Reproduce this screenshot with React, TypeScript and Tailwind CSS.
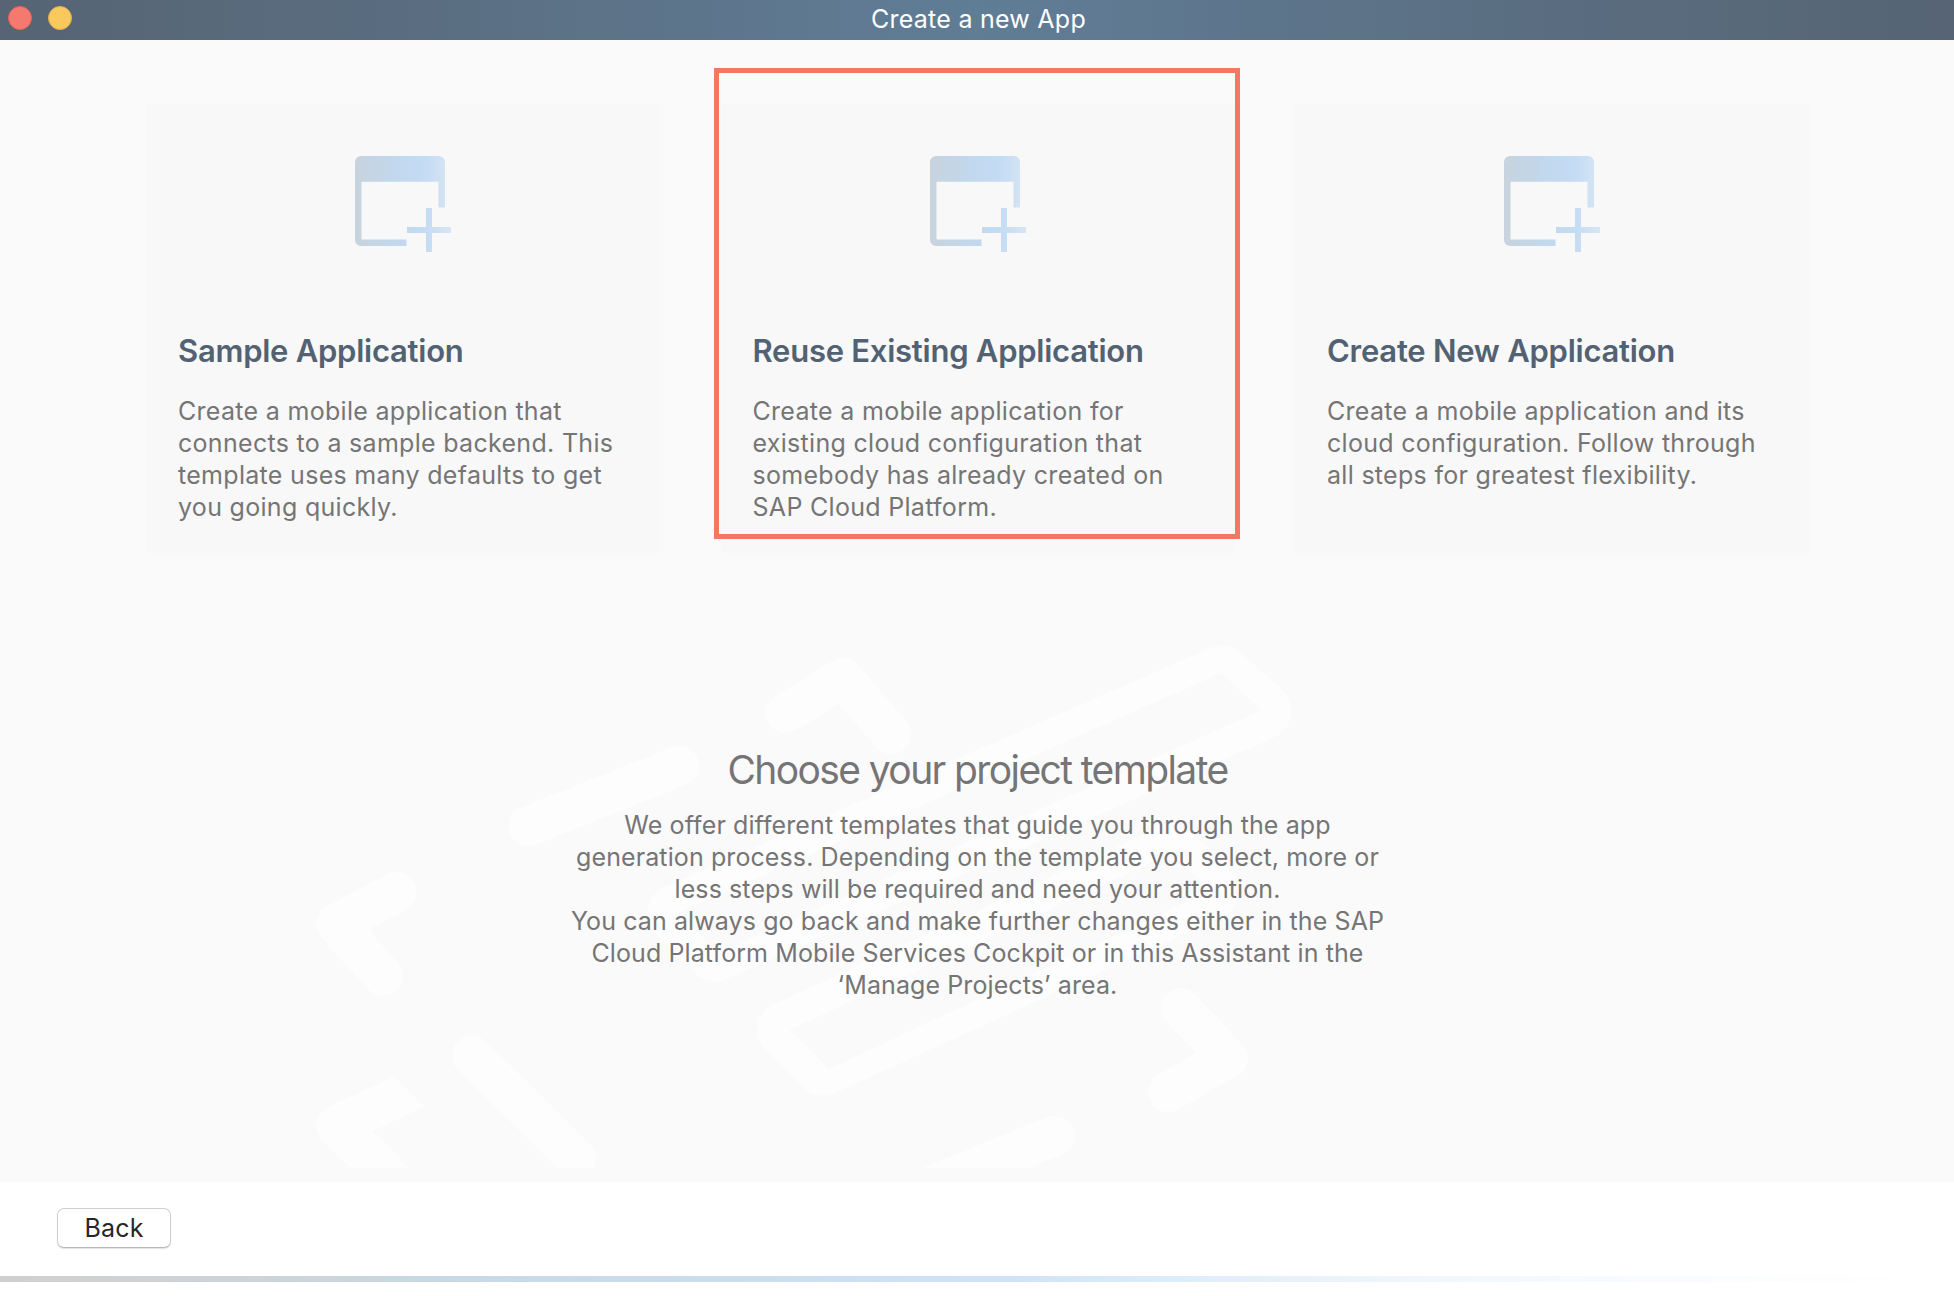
import React from "react";

type Template = { title: string; lines: string[]; highlighted?: boolean };

const templates: Template[] = [
  {
    title: "Sample Application",
    lines: [
      "Create a mobile application that",
      "connects to a sample backend. This",
      "template uses many defaults to get",
      "you going quickly.",
    ],
  },
  {
    title: "Reuse Existing Application",
    lines: [
      "Create a mobile application for",
      "existing cloud configuration that",
      "somebody has already created on",
      "SAP Cloud Platform.",
    ],
    highlighted: true,
  },
  {
    title: "Create New Application",
    lines: [
      "Create a mobile application and its",
      "cloud configuration. Follow through",
      "all steps for greatest flexibility.",
    ],
  },
];

const introLines = [
  "We offer different templates that guide you through the app",
  "generation process. Depending on the template you select, more or",
  "less steps will be required and need your attention.",
  "You can always go back and make further changes either in the SAP",
  "Cloud Platform Mobile Services Cockpit or in this Assistant in the",
  "‘Manage Projects’ area.",
];

function Lines({ lines }: { lines: string[] }) {
  return (
    <>
      {lines.map((line) => (
        <span key={line} className="block whitespace-nowrap">
          {line}
        </span>
      ))}
    </>
  );
}

function NewWindowIcon({ id }: { id: string }) {
  return (
    <svg width="96" height="96" viewBox="0 0 96 96" fill={`url(#${id})`}>
      <defs>
        <linearGradient id={id} gradientUnits="userSpaceOnUse" x1="0" y1="0" x2="96" y2="0">
          <stop offset="0" stopColor="#c8d3dd" />
          <stop offset="0.45" stopColor="#c1d8ee" />
          <stop offset="0.75" stopColor="#c4dcf4" />
          <stop offset="0.9" stopColor="#d0e2f3" />
          <stop offset="1" stopColor="#d6e6f5" />
        </linearGradient>
      </defs>
      <path d="M6 0H84a6 6 0 0 1 6 6V51.5H83.5V25.7H6.5V83.5H51.5V90H6a6 6 0 0 1-6-6V6a6 6 0 0 1 6-6Z" />
      <path d="M71 52h6v19h19v6H77v19h-6V77H52v-6h19Z" />
    </svg>
  );
}

function Card({ template, index }: { template: Template; index: number }) {
  return (
    <article className="relative h-[449px] w-[514px] bg-[#f8f8f8] pt-[52px] pl-[32px]">
      <div className="pl-[177px]">
        <NewWindowIcon id={`window-${index}`} />
      </div>
      <h2 className="mt-[79px] text-[31px] leading-[40px] font-semibold tracking-[-0.25px] whitespace-nowrap text-[#536272]">
        {template.title}
      </h2>
      <p className="mt-[24px] text-[25px] leading-[32px] tracking-[0.3px] text-[#757575]">
        <Lines lines={template.lines} />
      </p>
      {template.highlighted && (
        <div className="absolute -top-[36px] -left-[6.5px] h-[471px] w-[526px] border-5 border-[#f47766]" />
      )}
    </article>
  );
}

function Watermark() {
  return (
    <svg
      className="absolute top-[590px] left-[300px]"
      width="1020"
      height="538"
      viewBox="300 630 1020 538"
      fill="none"
      stroke="#fdfdfd"
      strokeWidth="40"
      strokeLinecap="round"
      strokeLinejoin="round"
    >
      <mask id="frames" maskUnits="userSpaceOnUse" x="300" y="630" width="1020" height="538">
        <rect x="300" y="630" width="1020" height="538" fill="#fff" stroke="none" />
        <path
          d="M1221 673L1262 710L719 953L678 913ZM1172 853L1210 891L829 1069L789 1030Z"
          fill="#000"
          stroke="none"
        />
      </mask>
      <path
        mask="url(#frames)"
        strokeWidth="57"
        d="M1222 674L1263 711L715 953L676 913ZM1172 853L1210 891L823 1067L786 1030Z"
      />
      <path d="M528.5 826L679 766" />
      <path d="M396 892L336 924L383 976" />
      <path d="M786 713L843 678L891 734" />
      <path d="M1181 1008L1228 1058L1168 1092" />
      <path d="M472 1056L576 1158" />
      <path d="M1054 1136L880 1207" />
      <path
        d="M394 1076.5L424.5 1106.5L372.5 1131L409 1168H351L323 1141Q306 1119 328 1107Z"
        fill="#fdfdfd"
        stroke="none"
      />
    </svg>
  );
}

export default function App() {
  return (
    <div className="flex h-[1296px] w-[1954px] flex-col overflow-hidden bg-white font-['Inter',sans-serif]">
      <header className="relative flex h-[40px] items-center justify-center bg-[linear-gradient(90deg,#566474_0%,#5a6d80_20%,#607d96_50%,#5a6d80_80%,#566474_100%)]">
        <div className="absolute left-[8px] flex gap-[16px] pb-[4px]">
          <span className="size-[24px] rounded-full border border-[#e2635b] bg-[#f5796e]" />
          <span className="size-[24px] rounded-full border border-[#e0b04c] bg-[#f9c95e]" />
        </div>
        <h1 className="pb-[3px] pl-[3px] text-[25px] leading-[32px] tracking-[0.25px] text-white">
          Create a new App
        </h1>
      </header>

      <main className="relative h-[1142px] bg-[#fafafa] pt-[64px] pl-[1px]">
        <Watermark />
        <section className="flex justify-center gap-[60.5px]">
          {templates.map((template, index) => (
            <Card key={template.title} template={template} index={index} />
          ))}
        </section>
        <section className="relative mt-[192px] flex flex-col items-center text-center text-[#757575]">
          <h2 className="text-[39px] leading-[50px] tracking-[-1.6px] whitespace-nowrap">
            Choose your project template
          </h2>
          <p className="mt-[14px] text-[25px] leading-[32px] tracking-[0.1px]">
            <Lines lines={introLines} />
          </p>
        </section>
      </main>

      <footer className="flex flex-1 flex-col justify-between bg-white pt-[26px] pb-[14px]">
        <button className="ml-[57px] h-[40px] w-[114px] rounded-[7px] border border-[#cfcfcf] border-b-[#b9b9b9] bg-white text-[25px] leading-[36px] tracking-[0.2px] text-[#262626] shadow-[0_1px_1px_rgba(0,0,0,0.12)]">
          Back
        </button>
        <div className="h-[6px] bg-[linear-gradient(90deg,#cfcfcf_0%,#cfd1d4_8%,#c9d7e1_20%,#cbdcec_35%,#d0e4f5_52%,#e2effa_63%,#f2f7fe_74%,#fcfdff_90%,#ffffff_100%)]" />
      </footer>
    </div>
  );
}
